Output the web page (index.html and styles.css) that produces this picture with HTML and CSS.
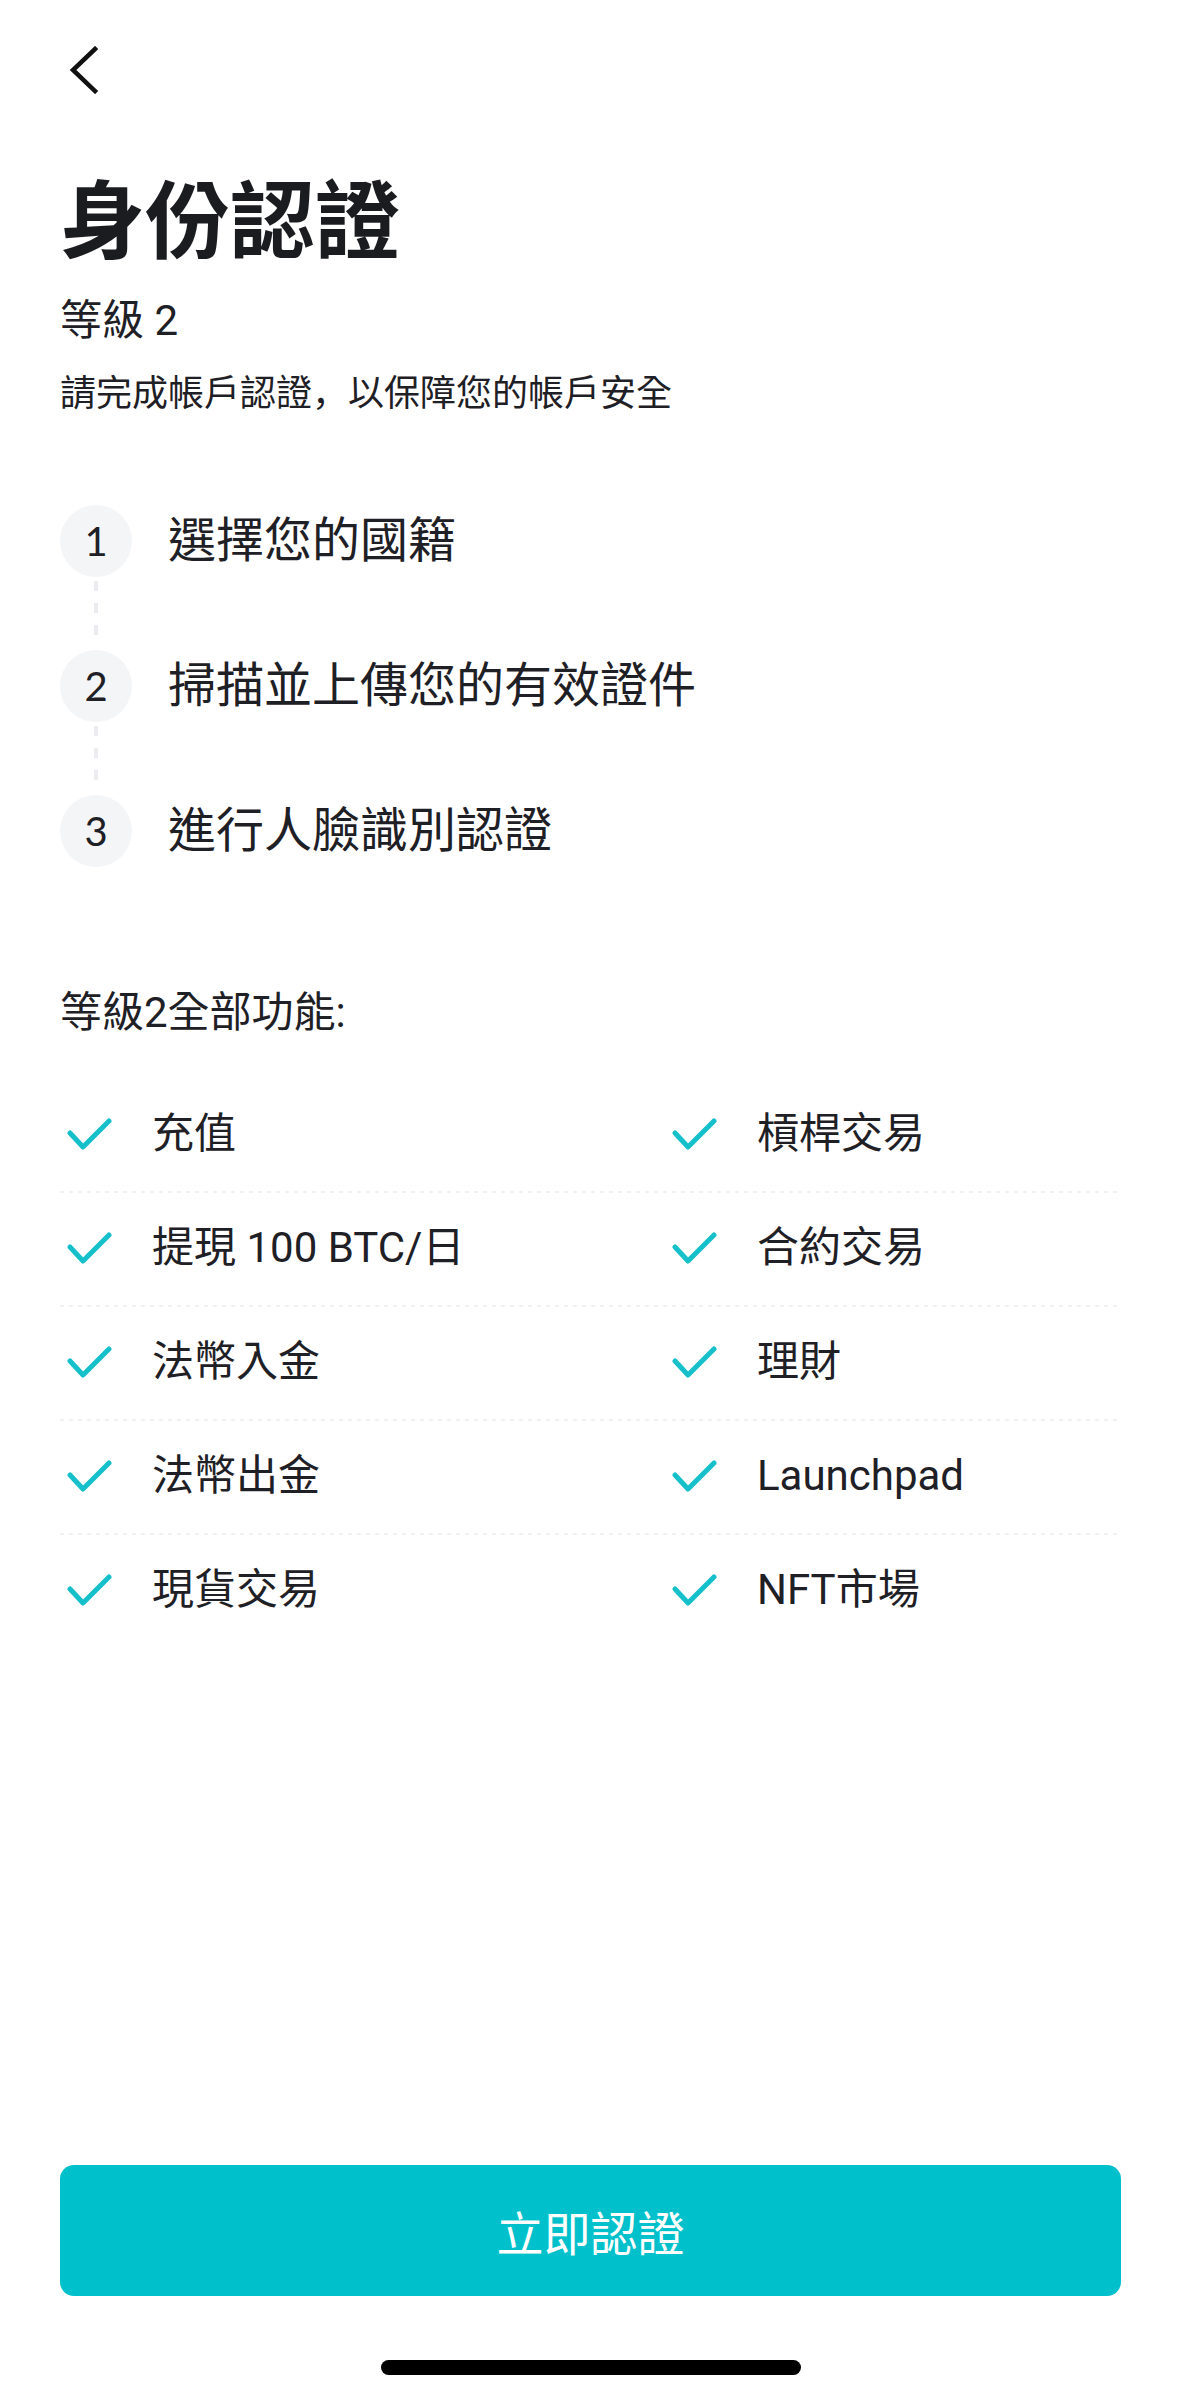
FILE: index.html
```html
<!DOCTYPE html>
<html>
<head>
  <meta charset="UTF-8">
  <meta name="viewport" content="width=device-width, initial-scale=1">
  <title>身份認證</title>
  <link rel="stylesheet" href="styles.css">
</head>
<body>
  <div class="page">
    <!-- Top bar with back button -->
    <div class="top-bar">
      <svg class="back-icon" width="48" height="48" viewBox="0 0 48 48">
        <path d="M35 3 L13 24 L35 45" fill="none" stroke="#111111" stroke-width="4.5" stroke-linecap="square" stroke-linejoin="miter"/>
      </svg>
    </div>

    <h1 class="title">身份認證</h1>
    <div class="level">等級 2</div>
    <div class="subtitle">請完成帳戶認證<span class="punct">，</span>以保障您的帳戶安全</div>

    <!-- Verification steps -->
    <div class="steps">
      <div class="step">
        <span class="step-num">1</span>
        <span class="step-text">選擇您的國籍</span>
      </div>
      <div class="step-link"><span></span></div>
      <div class="step">
        <span class="step-num">2</span>
        <span class="step-text">掃描並上傳您的有效證件</span>
      </div>
      <div class="step-link"><span></span></div>
      <div class="step">
        <span class="step-num">3</span>
        <span class="step-text">進行人臉識別認證</span>
      </div>
    </div>

    <div class="features-title">等級2全部功能:</div>

    <div class="features">
      <div class="feature-row">
        <div class="feature">
          <svg class="check" width="46" height="34" viewBox="0 0 46 34"><path d="M3 16 L16 30 L42 4" fill="none" stroke="#15c0cb" stroke-width="5" stroke-linecap="round" stroke-linejoin="round"/></svg>
          <span>充值</span>
        </div>
        <div class="feature">
          <svg class="check" width="46" height="34" viewBox="0 0 46 34"><path d="M3 16 L16 30 L42 4" fill="none" stroke="#15c0cb" stroke-width="5" stroke-linecap="round" stroke-linejoin="round"/></svg>
          <span>槓桿交易</span>
        </div>
      </div>
      <div class="feature-row">
        <div class="feature">
          <svg class="check" width="46" height="34" viewBox="0 0 46 34"><path d="M3 16 L16 30 L42 4" fill="none" stroke="#15c0cb" stroke-width="5" stroke-linecap="round" stroke-linejoin="round"/></svg>
          <span>提現 100 BTC/日</span>
        </div>
        <div class="feature">
          <svg class="check" width="46" height="34" viewBox="0 0 46 34"><path d="M3 16 L16 30 L42 4" fill="none" stroke="#15c0cb" stroke-width="5" stroke-linecap="round" stroke-linejoin="round"/></svg>
          <span>合約交易</span>
        </div>
      </div>
      <div class="feature-row">
        <div class="feature">
          <svg class="check" width="46" height="34" viewBox="0 0 46 34"><path d="M3 16 L16 30 L42 4" fill="none" stroke="#15c0cb" stroke-width="5" stroke-linecap="round" stroke-linejoin="round"/></svg>
          <span>法幣入金</span>
        </div>
        <div class="feature">
          <svg class="check" width="46" height="34" viewBox="0 0 46 34"><path d="M3 16 L16 30 L42 4" fill="none" stroke="#15c0cb" stroke-width="5" stroke-linecap="round" stroke-linejoin="round"/></svg>
          <span>理財</span>
        </div>
      </div>
      <div class="feature-row">
        <div class="feature">
          <svg class="check" width="46" height="34" viewBox="0 0 46 34"><path d="M3 16 L16 30 L42 4" fill="none" stroke="#15c0cb" stroke-width="5" stroke-linecap="round" stroke-linejoin="round"/></svg>
          <span>法幣出金</span>
        </div>
        <div class="feature">
          <svg class="check" width="46" height="34" viewBox="0 0 46 34"><path d="M3 16 L16 30 L42 4" fill="none" stroke="#15c0cb" stroke-width="5" stroke-linecap="round" stroke-linejoin="round"/></svg>
          <span>Launchpad</span>
        </div>
      </div>
      <div class="feature-row">
        <div class="feature">
          <svg class="check" width="46" height="34" viewBox="0 0 46 34"><path d="M3 16 L16 30 L42 4" fill="none" stroke="#15c0cb" stroke-width="5" stroke-linecap="round" stroke-linejoin="round"/></svg>
          <span>現貨交易</span>
        </div>
        <div class="feature">
          <svg class="check" width="46" height="34" viewBox="0 0 46 34"><path d="M3 16 L16 30 L42 4" fill="none" stroke="#15c0cb" stroke-width="5" stroke-linecap="round" stroke-linejoin="round"/></svg>
          <span>NFT市場</span>
        </div>
      </div>
    </div>

    <!-- Bottom action -->
    <button class="verify-btn">立即認證</button>
    <div class="home-bar"></div>
  </div>
</body>
</html>
```

FILE: styles.css
```css
/* Global styles */
html, body {
  margin: 0;
  padding: 0;
  background-color: #ffffff;
  color: #1e2026;
  font-family: Roboto, "Noto Sans CJK TC", sans-serif;
}
.page {
  display: flex;
  flex-direction: column;
  min-height: 2399px;
  padding: 0 58px 0 60px;
  box-sizing: border-box;
}
.top-bar {
  height: 140px;
  padding-top: 46px;
  box-sizing: border-box;
}
.back-icon {
  display: block;
}
.title {
  margin: 33px 0 0 0;
  font-size: 85px;
  line-height: 100px;
  font-weight: 700;
  color: #1a1c20;
}
.level {
  margin-top: 20px;
  font-size: 42px;
  line-height: 56px;
}
.subtitle {
  margin-top: 16px;
  font-size: 36px;
  line-height: 50px;
}
/* Full-width comma sits low and left, as in the app */
.punct {
  font-family: "Noto Sans CJK SC", sans-serif;
}
/* Steps list */
.steps {
  margin-top: 86px;
  display: flex;
  flex-direction: column;
}
.step {
  display: flex;
  align-items: center;
  height: 72px;
}
.step-num {
  width: 72px;
  height: 72px;
  border-radius: 50%;
  background-color: #f4f5f7;
  display: flex;
  align-items: center;
  justify-content: center;
  font-family: Lato, Roboto, sans-serif;
  font-size: 40px;
  color: #1e2026;
}
.step-text {
  margin-left: 36px;
  font-size: 48px;
  line-height: 60px;
}
.step-link {
  width: 72px;
  height: 73px;
  display: flex;
  justify-content: center;
}
.step-link span {
  width: 4px;
  height: 65px;
  margin-top: 4px;
  background: repeating-linear-gradient(to bottom, #eaecef 0 10px, transparent 10px 22px);
}
/* Feature grid */
.features-title {
  margin-top: 118px;
  font-size: 42px;
  line-height: 56px;
}
.features {
  margin-top: 36px;
}
.feature-row {
  display: grid;
  grid-template-columns: 605px 1fr;
  align-items: center;
  height: 114px;
}
.feature-row + .feature-row {
  background: repeating-linear-gradient(to right, #f0f1f3 0 4px, transparent 4px 9px) top left / 100% 2px no-repeat;
}
.feature {
  display: flex;
  align-items: center;
  font-size: 42px;
  line-height: 56px;
  padding-left: 7px;
}
.check {
  display: block;
  margin-right: 39px;
}
.verify-btn {
  margin-top: auto;
  width: 100%;
  height: 131px;
  border: none;
  border-radius: 14px;
  background-color: #00c1cb;
  color: #ffffff;
  font-family: Roboto, "Noto Sans CJK TC", sans-serif;
  font-size: 47px;
  cursor: pointer;
}
.home-bar {
  align-self: center;
  width: 420px;
  height: 15px;
  border-radius: 8px;
  background-color: #000000;
  margin: 64px 0 24px 0;
}
```
